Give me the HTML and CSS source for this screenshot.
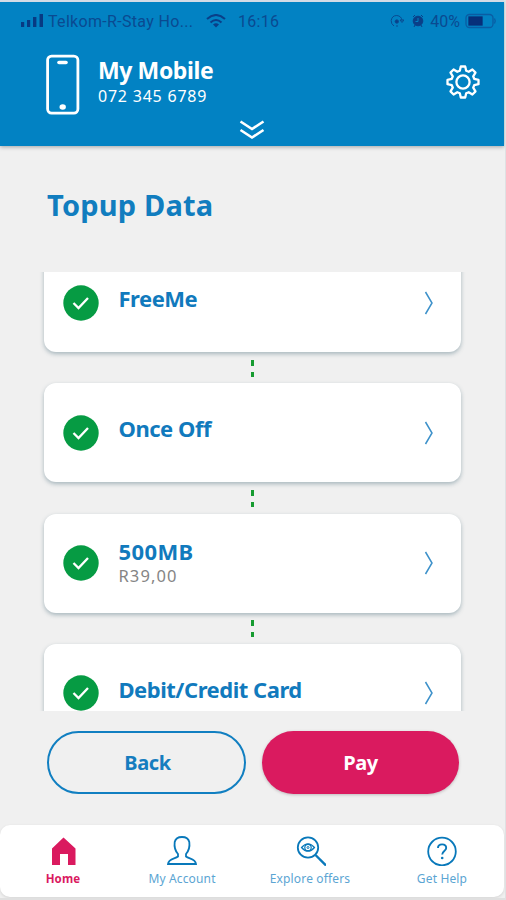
FILE: index.html
```html
<!DOCTYPE html>
<html lang="en">
<head>
<meta charset="utf-8">
<title>Topup Data</title>
<link rel="stylesheet" href="styles.css">
</head>
<body>
<div class="app">
  <header class="header">
    <div class="status">
      <svg class="signal" width="24" height="14" viewBox="0 0 24 14"><path d="M1 8h3.200v5H1zM7 6h3.200v7H7zM13 3h3.400v10H13zM19.500 0h3.500v13h-3.500z"/></svg>
      <span class="carrier">Telkom-R-Stay Ho...</span>
      <svg class="wifi" width="20" height="14" viewBox="0 0 20 14" fill="none" stroke="#0a3f88" stroke-width="2"><path d="M1 5Q10-3 19 5M4.500 8.500Q10 3.500 15.500 8.500"/><path d="M7 10.500Q10 8 13 10.500L10 13.500z" fill="#0a3f88" stroke="none"/></svg>
      <span class="time">16:16</span>
      <span class="status-right">
        <svg width="14" height="14" viewBox="0 0 14 14" fill="none" stroke="#0a4a91"><path d="M4 12Q1 10 1.200 6.500 2 1.500 6.800 1.500 11.500 2 12 6.500M10 6h4l-2 2.500zM6 12h2"/><circle cx="6.800" cy="7.500" r="1.700" fill="#0a3f88"/></svg>
        <svg width="12" height="14" viewBox="0 0 12 14" fill="none" stroke="#0a3f88"><circle cx="6" cy="7" r="4.800" fill="#0a3f88"/><path d="M1 3l2-2M11 3L9 1M2 13l1-2M10 13l-1-2"/><path d="M6 4v3.500H3.500" stroke="#0282c3"/></svg>
        <span class="percent">40%</span>
        <svg width="32" height="16" viewBox="0 0 32 16" fill="none" stroke="#0a5ca3" stroke-width="1.300"><rect x="1" y="1.500" width="27" height="13" rx="3.500"/><path d="M29.500 5.500q1.500 2.500 0 5"/><rect x="4" y="4" width="13" height="8" fill="#072f7a" stroke="#072f7a"/></svg>
      </span>
    </div>
    <div class="line">
      <svg class="phone" width="34" height="61" viewBox="0 0 34 61" fill="none" stroke="#fff" stroke-linecap="round"><rect x="1.600" y="2.100" width="30.300" height="57" rx="4" stroke-width="2.800"/><path d="M13 8.500h7" stroke-width="3.600"/><ellipse cx="16.700" cy="53" rx="3.200" ry="2.800" fill="#fff" stroke="none"/></svg>
      <div class="who">
        <div class="name">My Mobile</div>
        <div class="number">072 345 6789</div>
      </div>
      <svg class="gear" width="34" height="34" viewBox="-17 -17 34 34" fill="none" stroke="#fff" stroke-width="2.300" stroke-linejoin="round"><circle r="6.600"/><path d="M-2.200-15.500H2.200L3.200-11.200 5.700-10.200 9.400-12.500 12.500-9.400 10.200-5.700 11.200-3.200 15.500-2.200V2.200L11.200 3.200 10.200 5.700 12.500 9.400 9.400 12.500 5.700 10.200 3.200 11.200 2.200 15.500H-2.200L-3.200 11.200-5.700 10.200-9.400 12.500-12.500 9.400-10.200 5.700-11.200 3.200-15.500 2.200V-2.200L-11.200-3.200-10.200-5.700-12.500-9.400-9.400-12.500-5.700-10.200-3.200-11.200z"/></svg>
    </div>
    <svg class="expand" width="26" height="20" viewBox="0 0 26 20" fill="none" stroke="#fff" stroke-width="2.600"><path d="M1.500 1.500L13 9 24.500 1.500M1.500 10L13 17.500 24.500 10"/></svg>
  </header>

  <main class="main">
    <h1 class="title">Topup Data</h1>
    <div class="steps">
      <div class="card">
        <svg class="check" viewBox="0 0 36 36"><circle cx="18" cy="18" r="17.700"/><path d="M10.500 18l5 5 9.500-10"/></svg>
        <div class="label"><div class="step">FreeMe</div></div>
        <svg class="chevron" viewBox="0 0 10 24"><path d="M1.500 1l6.500 11-6.500 11"/></svg>
      </div>
      <div class="link"></div>
      <div class="card">
        <svg class="check" viewBox="0 0 36 36"><circle cx="18" cy="18" r="17.700"/><path d="M10.500 18l5 5 9.500-10"/></svg>
        <div class="label"><div class="step">Once Off</div></div>
        <svg class="chevron" viewBox="0 0 10 24"><path d="M1.500 1l6.500 11-6.500 11"/></svg>
      </div>
      <div class="link"></div>
      <div class="card">
        <svg class="check" viewBox="0 0 36 36"><circle cx="18" cy="18" r="17.700"/><path d="M10.500 18l5 5 9.500-10"/></svg>
        <div class="label priced"><div class="step size">500MB</div><div class="price">R39,00</div></div>
        <svg class="chevron" viewBox="0 0 10 24"><path d="M1.500 1l6.500 11-6.500 11"/></svg>
      </div>
      <div class="link"></div>
      <div class="card">
        <svg class="check" viewBox="0 0 36 36"><circle cx="18" cy="18" r="17.700"/><path d="M10.500 18l5 5 9.500-10"/></svg>
        <div class="label"><div class="step">Debit/Credit Card</div></div>
        <svg class="chevron" viewBox="0 0 10 24"><path d="M1.500 1l6.500 11-6.500 11"/></svg>
      </div>
    </div>
    <div class="actions">
      <button class="btn back">Back</button>
      <button class="btn pay">Pay</button>
    </div>
  </main>

  <nav class="tabs">
    <div class="tab home">
      <svg width="30" height="30" viewBox="0 0 30 30"><path d="M15.500 1.500L27.500 12.500V29H20V18H12V29H4V12.500z"/></svg>
      <span>Home</span>
    </div>
    <div class="tab account">
      <svg width="30" height="30" viewBox="0 0 30 30"><path d="M11 18C7.500 14 7.300 9 7.700 6 8.500 2.500 11 1 15 1s6.500 1.500 7.300 5c.4 3 .2 8-3.300 12v2.500C22 23 28.500 22.500 29 28H1C1.500 22.500 8 23 11 20.500z"/></svg>
      <span>My Account</span>
    </div>
    <div class="tab explore">
      <svg width="32" height="30" viewBox="0 0 32 30"><circle cx="14" cy="11.500" r="10.200"/><path d="M21.500 19L32 29.500" stroke-width="2.400"/><path d="M7.500 11.500Q14 4 20.500 11.500 14 19 7.500 11.500z" stroke-width="1.200"/><circle cx="14" cy="11.500" r="3.200" stroke-width="1.200"/><circle cx="14" cy="11.500" r="1" stroke-width="1"/></svg>
      <span>Explore offers</span>
    </div>
    <div class="tab help">
      <svg width="30" height="30" viewBox="0 0 30 30"><circle cx="15" cy="15.500" r="13.800"/><path d="M11 12C11 7.200 19.200 7.200 19.200 12 19.200 15 15.200 15 15.200 18.500" stroke-width="1.900"/><circle cx="15.200" cy="22" r="1.300" fill="#0878ba" stroke="none"/></svg>
      <span>Get Help</span>
    </div>
  </nav>
</div>
</body>
</html>
```
FILE: styles.css
```css
* { box-sizing: border-box; }
body { margin: 0; background: #f0f1f1; font-family: "Noto Sans", sans-serif; }
svg { display: block; flex: none; }
.app { width: 506px; height: 900px; display: flex; flex-direction: column; overflow: hidden; background: #f0f0f0; border-right: 1px solid #dfe1e3; border-bottom: 2px solid #e0e0e0; }

.header { height: 146px; flex: none; border-top: 2px solid #d3dbe6; background: #0282c3; width: 504px; box-shadow: 0 1px 4px rgba(60, 70, 80, .45); }
.status { display: flex; align-items: center; height: 38px; padding-left: 20px; color: #0a4a91; font: 16px/20px Roboto, sans-serif; }
.signal { fill: #073a83; margin-top: 0; }
.carrier { width: 145px; margin-left: 4px; padding-top: 1px; letter-spacing: .32px; white-space: nowrap; }
.wifi { margin-left: 13px; }
.time { margin-left: 12px; padding-top: 1px; letter-spacing: .3px; }
.status-right { display: flex; align-items: center; gap: 8px; margin-left: auto; padding-right: 7px; }
.percent { margin-left: -2px; padding-top: 1px; margin-right: -3px; }
.line { display: flex; height: 61px; margin: 14px 24px 0 46px; color: #fff; }
.who { margin-left: 18px; flex: 1; }
.name { font-size: 23px; font-weight: 700; line-height: 30px; margin-top: 1px; letter-spacing: -.4px; }
.number { font-size: 16px; line-height: 20px; letter-spacing: .78px; margin-top: 1px; }
.gear { margin-top: 11px; }
.expand { margin: 5px 0 0 239px; }

.main { flex: 1; display: flex; flex-direction: column; }
.title { margin: 39px 0 0 47px; height: 87px; font-size: 29px; line-height: 40px; letter-spacing: .2px; color: #117dbf; }
.steps { height: 439px; overflow: hidden; padding: 0 44px; display: flex; flex-direction: column; }
.card { flex: none; display: flex; align-items: center; width: 417px; height: 99px; padding: 0 27px 0 19px; border-radius: 12px; background: #fff; box-shadow: 0 2px 4px rgba(70, 105, 120, .42); }
.card:first-child { margin-top: -19px; }
.check { width: 36px; height: 36px; }
.check circle { fill: #069b43; }
.check path { fill: none; stroke: #fff; stroke-width: 2.3; }
.label { flex: 1; margin-left: 19.500px; padding-bottom: 9px; }
.priced { padding-bottom: 2px; }
.step { font-size: 22px; line-height: 28px; font-weight: 700; letter-spacing: -.48px; color: #117abd; white-space: nowrap; }
.size { letter-spacing: .4px; line-height: 26px; }
.price { font-size: 16.5px; line-height: 23px; letter-spacing: 1.1px; color: #858585; }
.chevron { width: 10px; height: 24px; fill: none; stroke: #3c91ca; stroke-width: 1.5; }
.link { flex: none; align-self: flex-start; width: 3px; height: 18px; margin: 7.800px 0 5.500px 207px; background: linear-gradient(#169b30 0 6px, transparent 6px 12px, #169b30 12px 17px, transparent 17px); }
.actions { display: flex; gap: 16px; padding: 20px 0 0 47px; }
.btn { height: 63px; padding: 0; border: 0; border-radius: 32px; font: 700 20px "Noto Sans", sans-serif; letter-spacing: -.4px; }
.back { width: 199px; border: 2px solid #117fc1; background: transparent; color: #157dbf; padding-left: 2px; }
.pay { width: 197px; background: #da1a5f; color: #fff; box-shadow: 0 1px 3px rgba(80, 60, 70, .3); }

.tabs { flex: none; display: flex; width: 504px; height: 72px; border-radius: 10px; background: #fff; margin-bottom: 1px; padding-top: 11px; box-shadow: 0 1px 3px rgba(0, 0, 0, .12); }
.tab { display: flex; flex-direction: column; align-items: center; color: #5ba5d3; font-size: 12px; line-height: 16px; gap: 5px; letter-spacing: .15px; white-space: nowrap; }
.tab svg { fill: none; stroke: #0878ba; stroke-width: 1.8; }
.home { width: 126px; color: #da1a5f; font-size: 11.5px; font-weight: 700; }
.home svg { fill: #da1a5f; stroke: none; }
.account { width: 112px; }
.explore { width: 144px; }
.help { width: 120px; }
```
